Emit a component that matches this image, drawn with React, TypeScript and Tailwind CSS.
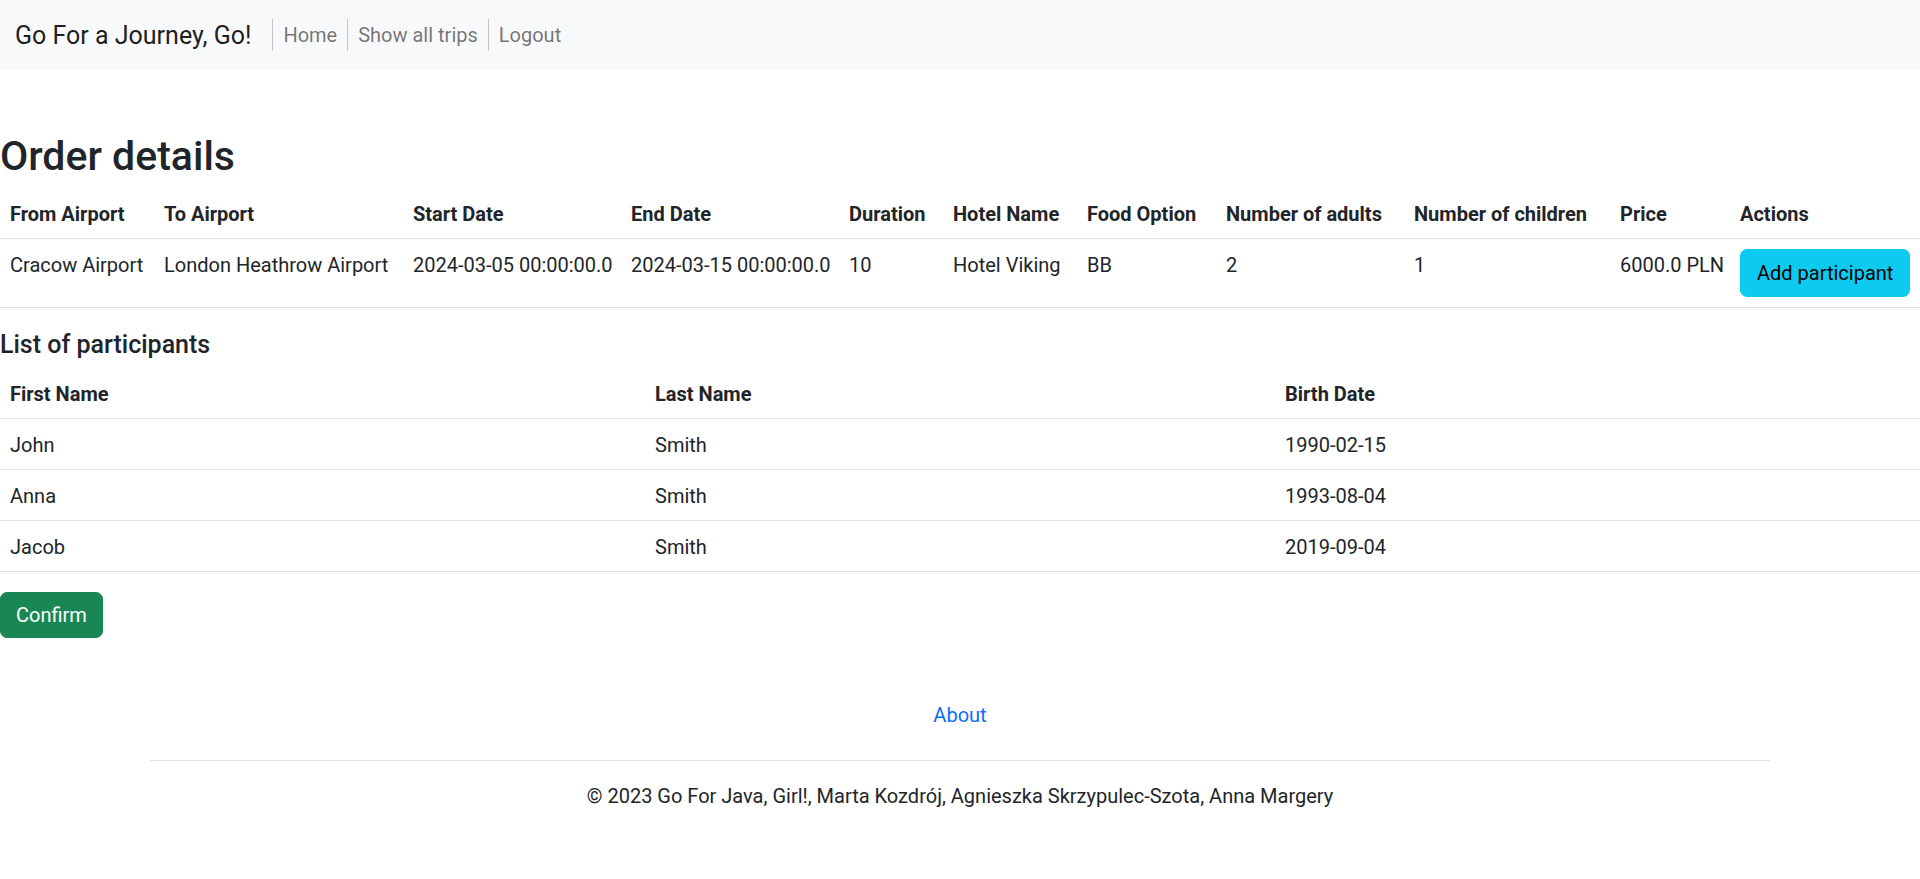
const orderCols = [
  { label: "From Airport", value: "Cracow Airport", w: "w-[154px]" },
  { label: "To Airport", value: "London Heathrow Airport", w: "w-[249px]" },
  { label: "Start Date", value: "2024-03-05 00:00:00.0", w: "w-[218px]" },
  { label: "End Date", value: "2024-03-15 00:00:00.0", w: "w-[218px]" },
  { label: "Duration", value: "10", w: "w-[104px]" },
  { label: "Hotel Name", value: "Hotel Viking", w: "w-[134px]" },
  { label: "Food Option", value: "BB", w: "w-[139px]" },
  { label: "Number of adults", value: "2", w: "w-[188px]" },
  { label: "Number of children", value: "1", w: "w-[206px]" },
  { label: "Price", value: "6000.0 PLN", w: "w-[120px]" },
];

const participants = [
  { first: "John", last: "Smith", birth: "1990-02-15" },
  { first: "Anna", last: "Smith", birth: "1993-08-04" },
  { first: "Jacob", last: "Smith", birth: "2019-09-04" },
];

const navLinks = ["Home", "Show all trips", "Logout"];

const cell = "px-[10px] pt-[11px] pb-[9px] text-left align-top whitespace-nowrap border-b border-[#dee2e6]";

export default function App() {
  return (
    <div className="min-h-screen bg-white text-[20px] leading-[30px] text-[#212529] font-[Roboto,'Noto_Sans',sans-serif]">
      <nav className="h-[70px] bg-[#f8f9fa] flex items-center px-[15px]">
        <a className="text-[25px] leading-[37px] text-black/90 mr-[21px]">Go For a Journey, Go!</a>
        <ul className="flex">
          {navLinks.map((l) => (
            <li key={l} className="h-[32px] flex items-center border-l border-[#c5c6c7] px-[10px] text-black/55">
              {l}
            </li>
          ))}
        </ul>
      </nav>

      <main>
        <h1 className="mt-[62px] mb-[8px] text-[41px] leading-[48px] font-medium">Order details</h1>
        <table className="w-full table-fixed border-collapse mb-[22px]">
          <thead>
            <tr>
              {orderCols.map((c) => (
                <th key={c.label} className={`${cell} ${c.w} font-bold`}>
                  {c.label}
                </th>
              ))}
              <th className={`${cell} font-bold`}>Actions</th>
            </tr>
          </thead>
          <tbody>
            <tr>
              {orderCols.map((c) => (
                <td key={c.label} className={cell}>
                  {c.value}
                </td>
              ))}
              <td className="px-[10px] py-[10px] align-top border-b border-[#dee2e6]">
                <button className="h-[48px] px-[16px] rounded-[7px] bg-[#0dcaf0] text-black border border-[#0dcaf0] whitespace-nowrap">
                  Add participant
                </button>
              </td>
            </tr>
          </tbody>
        </table>

        <h5 className="mb-[8px] text-[25px] leading-[30px] font-medium">List of participants</h5>
        <table className="w-full table-fixed border-collapse mb-[20px]">
          <thead>
            <tr>
              <th className={`${cell} w-[645px] font-bold`}>First Name</th>
              <th className={`${cell} w-[630px] font-bold`}>Last Name</th>
              <th className={`${cell} font-bold`}>Birth Date</th>
            </tr>
          </thead>
          <tbody>
            {participants.map((p) => (
              <tr key={p.first}>
                <td className={cell}>{p.first}</td>
                <td className={cell}>{p.last}</td>
                <td className={cell}>{p.birth}</td>
              </tr>
            ))}
          </tbody>
        </table>

        <button className="h-[46px] px-[15px] rounded-[7px] bg-[#198754] text-white border border-[#198754]">
          Confirm
        </button>
      </main>

      <footer className="w-[1650px] mx-auto px-[15px] mt-[32px] py-[20px]">
        <ul className="flex justify-center border-b border-[#dee2e6] pb-[20px] mb-[20px]">
          <li>
            <a className="block px-[10px] py-[10px] text-[#0d6efd]">About</a>
          </li>
        </ul>
        <p className="text-center text-[#212529]">
          © 2023 Go For Java, Girl!, Marta Kozdrój, Agnieszka Skrzypulec-Szota, Anna Margery
        </p>
      </footer>
    </div>
  );
}
